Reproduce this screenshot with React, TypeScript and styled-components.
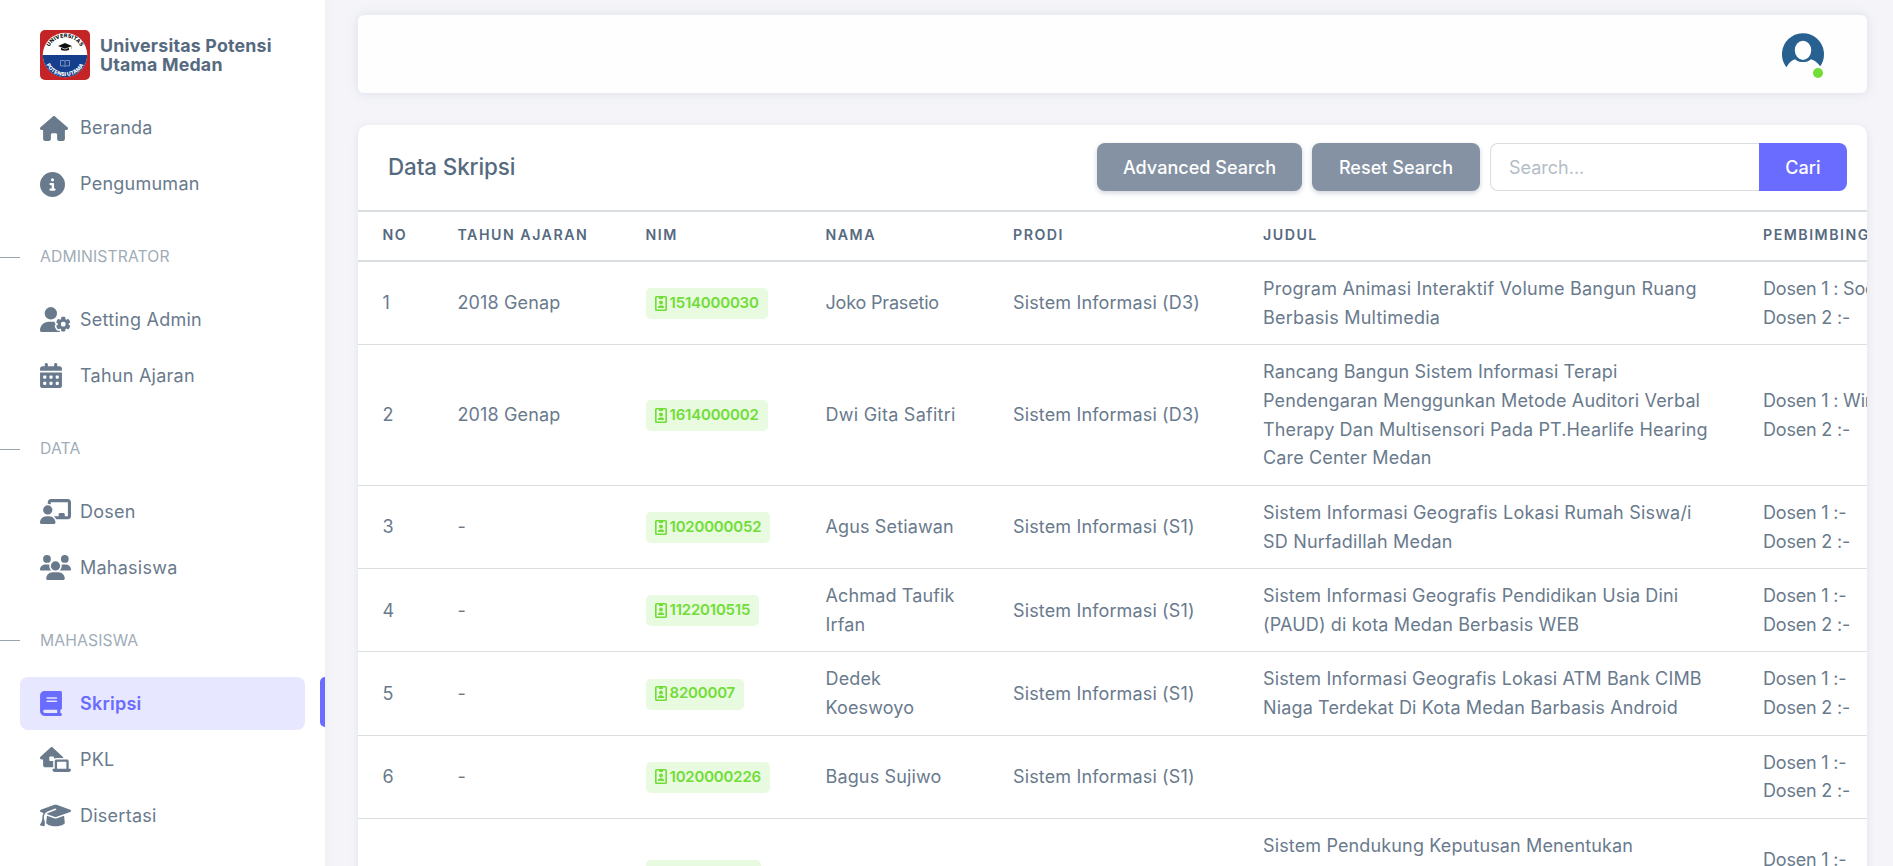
import React from "react";
import styled, { createGlobalStyle, css } from "styled-components";
import {
  FaHouse,
  FaCircleInfo,
  FaUserGear,
  FaCalendarDays,
  FaChalkboardUser,
  FaUsers,
  FaBook,
  FaHouseLaptop,
  FaGraduationCap,
} from "react-icons/fa6";

const GlobalStyle = createGlobalStyle`
  * { box-sizing: border-box; }
  body {
    margin: 0;
    background: #f5f5f9;
    color: #697a8d;
    font-family: Inter, "Liberation Sans", sans-serif;
    font-size: 18px;
    line-height: 28.69px;
    letter-spacing: 0.14px;
    overflow: hidden;
  }
`;

const Page = styled.div`
  display: flex;
  height: 866px;
  overflow: hidden;
`;

const Sidebar = styled.aside`
  flex: 0 0 325px;
  height: 866px;
  background: #fff;
  overflow: hidden;
  box-shadow: 0 2px 8px rgba(161, 172, 184, 0.15);
`;

const Brand = styled.div`
  display: flex;
  align-items: center;
  gap: 10px;
  height: 80px;
  margin: 15px 0 7px 40px;
  color: #566a7f;
  font-size: 17.8px;
  font-weight: 700;
  line-height: 19px;
  letter-spacing: 0.2px;
`;

const Menu = styled.nav`
  display: flex;
  flex-direction: column;
`;

const MenuRow = styled.div`
  display: flex;
  justify-content: space-between;
  margin-bottom: 3px;
  padding-left: 20px;
`;

const MenuLink = styled.a<{ $active?: boolean }>`
  display: flex;
  align-items: center;
  width: 285px;
  height: 53px;
  padding-left: 20px;
  border-radius: 8px;
  letter-spacing: 0.25px;
  ${(p) =>
    p.$active &&
    css`
      background: #e7e7ff;
      color: #696cff;
      font-weight: 600;
    `}
`;

const MenuIcon = styled.span<{ $w: number }>`
  display: flex;
  flex: 0 0 40px;
  margin-top: -1px;
  svg {
    width: ${(p) => p.$w}px;
    height: 25px;
  }
`;

const ActiveMark = styled.span`
  width: 5px;
  height: 50px;
  border-radius: 5px 0 0 5px;
  background: #696cff;
`;

const MenuHeader = styled.div`
  display: flex;
  align-items: center;
  gap: 20px;
  height: 79.8px;
  padding-top: 7px;
  color: #a1acb8;
  font-size: 15.7px;
  letter-spacing: 0.12px;
  &::before {
    content: "";
    width: 20px;
    height: 1px;
    background: #97a4b1;
  }
`;

const Content = styled.main`
  display: flex;
  flex: 1;
  flex-direction: column;
  gap: 32px;
  min-width: 0;
  padding: 15px 26px 0 33px;
`;

const Navbar = styled.header`
  display: flex;
  flex: 0 0 78px;
  align-items: center;
  justify-content: flex-end;
  padding-right: 43px;
  border-radius: 6px;
  background: #fefefe;
  box-shadow: 0 0 12px rgba(67, 89, 113, 0.14);
`;

const Avatar = styled.div`
  position: relative;
  width: 42px;
  height: 42px;
  svg { display: block; }
`;

const Online = styled.span`
  position: absolute;
  right: 1px;
  bottom: -3px;
  width: 10px;
  height: 10px;
  border-radius: 50%;
  background: #71dd37;
`;

const Card = styled.section`
  flex: 0 0 auto;
  overflow: hidden;
  border-radius: 10px;
  background: #fff;
  box-shadow: 0 2px 8px rgba(67, 89, 113, 0.12);
`;

const CardHeader = styled.div`
  display: flex;
  align-items: center;
  height: 85px;
  padding: 0 20px 1px 30px;
`;

const Title = styled.h5`
  flex: 1;
  margin: 0;
  padding-top: 1px;
  color: #566a7f;
  font-size: 22.4px;
  font-weight: 500;
  letter-spacing: -0.1px;
`;

const Button = styled.button<{ $w: number; $primary?: boolean }>`
  width: ${(p) => p.$w}px;
  height: 48px;
  padding: 0;
  border: 0;
  border-radius: ${(p) => (p.$primary ? "0 8px 8px 0" : "8px")};
  margin-right: ${(p) => (p.$primary ? 0 : 10)}px;
  background: ${(p) => (p.$primary ? "#696cff" : "#8592a3")};
  box-shadow: ${(p) => (p.$primary ? "none" : "0 2px 5px rgba(133, 146, 163, 0.4)")};
  color: #fff;
  font: 500 18px Inter, sans-serif;
  letter-spacing: 0.05px;
`;

const SearchInput = styled.input`
  width: 269px;
  height: 48px;
  padding: 0 18px;
  border: 1px solid #d9dee3;
  border-right: 0;
  border-radius: 8px 0 0 8px;
  outline: 0;
  font: 400 18px Inter, sans-serif;
  letter-spacing: 0;
  &::placeholder { color: #b4bdc6; opacity: 1; }
`;

const Table = styled.table`
  width: 1700px;
  table-layout: fixed;
  border-collapse: separate;
  border-spacing: 0;
`;

const HeadCell = styled.th<{ $w: number }>`
  width: ${(p) => p.$w}px;
  height: 52px;
  padding: 0 24px 1px 24.5px;
  border-top: 2px solid #d9dee3;
  border-bottom: 2px solid #d9dee3;
  color: #566a7f;
  font-size: 14.2px;
  font-weight: 600;
  letter-spacing: 1.5px;
  text-align: left;
  white-space: nowrap;
`;

const Cell = styled.td`
  padding: 13px 24px 11.9px 24.5px;
  border-bottom: 1px solid #d9dee3;
  vertical-align: middle;
  white-space: nowrap;
`;

const Line = styled.div<{ $track?: number }>`
  letter-spacing: ${(p) => p.$track ?? 0.14}px;
`;

const Badge = styled.span`
  display: inline-flex;
  align-items: center;
  gap: 3px;
  height: 31px;
  padding: 0 9px 1px;
  border-radius: 5px;
  background: #e8fadf;
  color: #71dd37;
  font-size: 15px;
  font-weight: 600;
  letter-spacing: -0.2px;
  vertical-align: middle;
`;

const BadgeIcon = () => (
  <svg width="12" height="15" viewBox="0 0 12 15" fill="none">
    <rect x="0.8" y="0.8" width="10.4" height="13.4" rx="0.8" stroke="currentColor" strokeWidth="1.6" />
    <path d="M4 0.8h4v2.2H4z" fill="currentColor" />
    <circle cx="6" cy="6.5" r="1.9" fill="currentColor" />
    <path d="M2.8 12c0-1.8 1.3-2.7 3.2-2.7s3.2.9 3.2 2.7z" fill="currentColor" />
  </svg>
);

const Logo = () => (
  <svg width="50" height="50" viewBox="0 0 50 50">
    <defs>
      <path id="arcTop" d="M7.4 25a17.6 17.6 0 0 1 35.2 0" />
      <path id="arcBottom" d="M3.9 25a21.1 21.1 0 0 0 42.2 0" />
    </defs>
    <rect width="50" height="50" rx="5" fill="#c42426" />
    <circle cx="25" cy="25" r="22.2" fill="#fff" />
    <path d="M2.8 25a22.2 22.2 0 0 0 44.4 0z" fill="#153e8c" />
    <g fontFamily="Inter, sans-serif" fontWeight="800" fontSize="5.3" letterSpacing="0" textAnchor="middle">
      <text fill="#111" letterSpacing=".2">
        <textPath href="#arcTop" startOffset="50%">UNIVERSITAS</textPath>
      </text>
      <text fill="#fff" letterSpacing=".1">
        <textPath href="#arcBottom" startOffset="50%">POTENSI UTAMA</textPath>
      </text>
    </g>
    <path d="M18 15.9l7-2.9 7 2.9-7 2.9zM21 17.7l4 1.7 4-1.7v2.2q-4 1.6-8 0z" fill="#111" />
    <path d="M31.4 16v3.2" stroke="#b9772d" strokeWidth=".6" />
    <path d="M20.5 30.5h3.6l.9.7.9-.7h3.6v5.4h-3.6l-.9.7-.9-.7h-3.6zM25 31v5.4" fill="none" stroke="#b9c9e6" strokeWidth=".6" />
  </svg>
);

const AvatarIcon = () => (
  <svg width="42" height="42" viewBox="0 0 42 42">
    <path d="M4.5 34.2A21 21 0 1 1 38.2 33.2C35.5 29.5 32.5 27.5 29 26.2C25 30 17 30 13 26.2C9 27.5 6.5 30 4.5 34.2Z" fill="#286090" />
    <ellipse cx="21" cy="17.3" rx="8.2" ry="9.6" fill="#fefefe" />
  </svg>
);

type Item = { label: string; icon?: React.ReactNode; w?: number; active?: boolean };

const menu: Item[] = [
  { label: "Beranda", icon: <FaHouse />, w: 28 },
  { label: "Pengumuman", icon: <FaCircleInfo />, w: 25 },
  { label: "ADMINISTRATOR" },
  { label: "Setting Admin", icon: <FaUserGear />, w: 31 },
  { label: "Tahun Ajaran", icon: <FaCalendarDays />, w: 22 },
  { label: "DATA" },
  { label: "Dosen", icon: <FaChalkboardUser />, w: 31 },
  { label: "Mahasiswa", icon: <FaUsers />, w: 31 },
  { label: "MAHASISWA" },
  { label: "Skripsi", icon: <FaBook />, w: 22, active: true },
  { label: "PKL", icon: <FaHouseLaptop />, w: 31 },
  { label: "Disertasi", icon: <FaGraduationCap />, w: 31 },
];

const columns: [string, number][] = [
  ["NO", 75],
  ["TAHUN AJARAN", 188],
  ["NIM", 180],
  ["NAMA", 187.5],
  ["PRODI", 250],
  ["JUDUL", 500],
  ["PEMBIMBING", 320],
];

type Thesis = {
  year: string;
  nim: string;
  name: string[];
  nameTrack?: number;
  program: string;
  title: string[];
  titleTrack?: number;
  advisor: string;
};

const rows: Thesis[] = [
  { year: "2018 Genap", nim: "1514000030", name: ["Joko Prasetio"], nameTrack: -0.18, program: "Sistem Informasi (D3)", title: ["Program Animasi Interaktif Volume Bangun Ruang", "Berbasis Multimedia"], titleTrack: 0.24, advisor: " Soeheri" },
  { year: "2018 Genap", nim: "1614000002", name: ["Dwi Gita Safitri"], nameTrack: 0.25, program: "Sistem Informasi (D3)", title: ["Rancang Bangun Sistem Informasi Terapi", "Pendengaran Menggunkan Metode Auditori Verbal", "Therapy Dan Multisensori Pada PT.Hearlife Hearing", "Care Center Medan"], advisor: " Wiranto" },
  { year: "-", nim: "1020000052", name: ["Agus Setiawan"], program: "Sistem Informasi (S1)", title: ["Sistem Informasi Geografis Lokasi Rumah Siswa/i", "SD Nurfadillah Medan"], titleTrack: 0.19, advisor: "-" },
  { year: "-", nim: "1122010515", name: ["Achmad Taufik", "Irfan"], program: "Sistem Informasi (S1)", title: ["Sistem Informasi Geografis Pendidikan Usia Dini", "(PAUD) di kota Medan Berbasis WEB"], advisor: "-" },
  { year: "-", nim: "8200007", name: ["Dedek", "Koeswoyo"], program: "Sistem Informasi (S1)", title: ["Sistem Informasi Geografis Lokasi ATM Bank CIMB", "Niaga Terdekat Di Kota Medan Barbasis Android"], advisor: "-" },
  { year: "-", nim: "1020000226", name: ["Bagus Sujiwo"], program: "Sistem Informasi (S1)", title: [], advisor: "-" },
  { year: "-", nim: "1110000102", name: ["Budi Santoso"], program: "Sistem Informasi (S1)", title: ["Sistem Pendukung Keputusan Menentukan", "Penerima Beasiswa", "Metode SAW"], advisor: "-" },
];

const Lines = ({ lines, track }: { lines: string[]; track?: number }) => (
  <>
    {lines.map((l) => (
      <Line key={l} $track={track}>{l}</Line>
    ))}
  </>
);

export default function App() {
  return (
    <Page>
      <GlobalStyle />
      <Sidebar>
        <Brand>
          <Logo />
          <div>
            Universitas Potensi
            <br />
            Utama Medan
          </div>
        </Brand>
        <Menu>
          {menu.map((m) =>
            m.icon ? (
              <MenuRow key={m.label}>
                <MenuLink $active={m.active}>
                  <MenuIcon $w={m.w ?? 25}>{m.icon}</MenuIcon>
                  {m.label}
                </MenuLink>
                {m.active && <ActiveMark />}
              </MenuRow>
            ) : (
              <MenuHeader key={m.label}>{m.label}</MenuHeader>
            )
          )}
        </Menu>
      </Sidebar>
      <Content>
        <Navbar>
          <Avatar>
            <AvatarIcon />
            <Online />
          </Avatar>
        </Navbar>
        <Card>
          <CardHeader>
            <Title>Data Skripsi</Title>
            <Button $w={205}>Advanced Search</Button>
            <Button $w={168}>Reset Search</Button>
            <SearchInput placeholder="Search..." />
            <Button $w={88} $primary>Cari</Button>
          </CardHeader>
          <Table>
            <thead>
              <tr>
                {columns.map(([label, w]) => (
                  <HeadCell key={label} $w={w}>{label}</HeadCell>
                ))}
              </tr>
            </thead>
            <tbody>
              {rows.map((r, i) => (
                <tr key={r.nim}>
                  <Cell>{i + 1}</Cell>
                  <Cell>{r.year}</Cell>
                  <Cell>
                    <Badge>
                      <BadgeIcon />
                      {r.nim}
                    </Badge>
                  </Cell>
                  <Cell><Lines lines={r.name} track={r.nameTrack} /></Cell>
                  <Cell>{r.program}</Cell>
                  <Cell><Lines lines={r.title} track={r.titleTrack} /></Cell>
                  <Cell><Lines lines={[`Dosen 1 :${r.advisor}`, "Dosen 2 :-"]} track={-0.2} /></Cell>
                </tr>
              ))}
            </tbody>
          </Table>
        </Card>
      </Content>
    </Page>
  );
}
